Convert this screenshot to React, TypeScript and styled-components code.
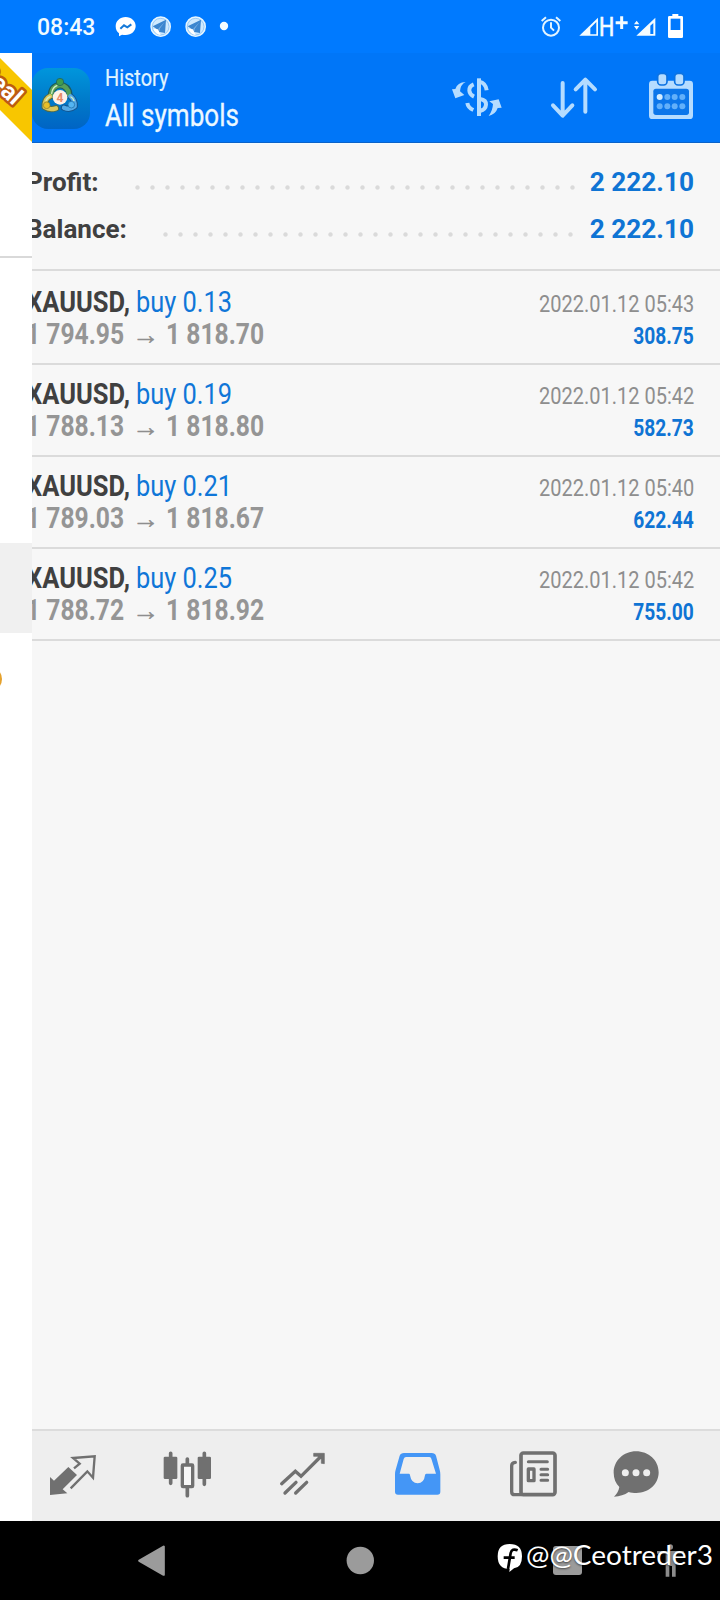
import React from 'react';
import styled, { createGlobalStyle } from 'styled-components';

const GlobalStyle = createGlobalStyle`
  *, *::before, *::after { box-sizing: border-box; }
  body { margin: 0; background: #000; font-family: Roboto, "Liberation Sans", sans-serif; }
  svg { display: block; flex: none; overflow: visible; }
`;

const Screen = styled.div`
  display: flex;
  flex-direction: column;
  width: 720px;
  height: 1600px;
  overflow: hidden;
`;

const StatusBar = styled.header`
  display: flex;
  align-items: flex-start;
  height: 53px;
  padding: 13px 0 0 37px;
  background: #007aff;
`;

const Clock = styled.time`
  width: 78px;
  font-size: 23px;
  line-height: 29px;
  font-weight: 500;
  color: #f2fbff;
`;

const StatusSpacer = styled.div`
  flex: 1;
`;

const Body = styled.div`
  display: flex;
  height: 1468px;
`;

const Drawer = styled.aside`
  display: flex;
  flex-direction: column;
  width: 32px;
  overflow: hidden;
  background: #fff;
`;

const DrawerDivider = styled.div`
  height: 2px;
  margin-top: 112px;
  background: #d9d9d9;
`;

const DrawerSelected = styled.div`
  height: 90px;
  margin-top: 285px;
  background: #f0f0f0;
`;

const DrawerDot = styled.div`
  width: 24px;
  height: 24px;
  margin: 34px 0 0 -22px;
  border-radius: 50%;
  background: #e5a12c;
`;

const Main = styled.main`
  display: flex;
  flex-direction: column;
  width: 688px;
  overflow: hidden;
  background: #f7f7f7;
`;

const Toolbar = styled.div`
  display: flex;
  height: 90px;
  background: #0076f8;
  border-bottom: 1px solid #0b62c9;
`;

const AppIcon = styled.div`
  width: 58px;
  height: 61px;
  margin-top: 15px;
  border-radius: 16px;
  background: linear-gradient(#0096dc, #0079c9 55%, #0064c4);
`;

const Titles = styled.div`
  flex: 1;
  padding: 11px 0 0 15px;
`;

const Condensed = styled.div<{ $scale: number; $right?: boolean }>`
  white-space: pre;
  width: max-content;
  transform: scaleX(${(p) => p.$scale});
  transform-origin: ${(p) => (p.$right ? 'right' : 'left')} center;
`;

const Subtitle = styled(Condensed)`
  font-size: 24px;
  line-height: 28px;
  color: #e0f4ff;
  -webkit-text-stroke: 0.2px #e0f4ff;
`;

const Title = styled(Condensed)`
  margin-top: 6px;
  font-size: 31px;
  line-height: 36px;
  color: #ecf8ff;
  -webkit-text-stroke: 0.3px #ecf8ff;
`;

const Actions = styled.div`
  display: flex;
  gap: 48px;
  padding: 18px 26px 0 0;
`;

const Summary = styled.section`
  height: 128px;
  padding: 16px 26px 0 0;
  border-top: 1px solid #f3fcff;
  border-bottom: 2px solid #dbdbdb;
`;

const SummaryRow = styled.div`
  display: flex;
  height: 47px;
  line-height: 44px;
  font-size: 26px;
  font-weight: 700;
  color: #404040;
`;

const SummaryLabel = styled.span<{ $width: number }>`
  width: ${(p) => p.$width}px;
  margin-left: -6px;
`;

const DotRun = styled.span<{ $count: number }>`
  flex: none;
  width: ${(p) => p.$count * 15}px;
  height: 15px;
  margin-top: 20px;
  background: radial-gradient(circle at center, #dadada 1.7px, transparent 2.7px) 0 0 / 15px 15px;
`;

const SummaryValue = styled.span`
  flex: 1;
  font-size: 26.2px;
  text-align: right;
  color: #0f74d4;
`;

const Deal = styled.article<{ $first?: boolean }>`
  display: flex;
  justify-content: space-between;
  height: ${(p) => (p.$first ? 94 : 92)}px;
  padding: ${(p) => (p.$first ? 14 : 12)}px 26px 0 0;
  border-bottom: 2px solid #dbdbdb;
`;

const DealInfo = styled.div`
  margin-left: -6px;
`;

const DealLine = styled.div`
  display: flex;
  height: 32px;
  line-height: 34px;
  font-size: 29px;
`;

const Piece = styled.div<{ $width: number }>`
  width: ${(p) => p.$width}px;
`;

const Symbol = styled(Condensed)`
  font-weight: 700;
  color: #404040;
`;

const Volume = styled(Condensed)`
  color: #0f76d8;
`;

const Price = styled(Condensed)`
  font-weight: 700;
  color: #959595;
`;

const Arrow = styled.span`
  font-family: "Liberation Sans", sans-serif;
  font-size: 27px;
  line-height: 36px;
  color: #8e8e8e;
  -webkit-text-stroke: 0.5px #8e8e8e;
`;

const DealMeta = styled.div`
  display: flex;
  flex-direction: column;
  align-items: flex-end;
  padding-top: 3px;
  font-size: 24px;
  line-height: 32px;
`;

const DealTime = styled(Condensed)`
  color: #8e8e8e;
`;

const DealProfit = styled(Condensed)`
  font-weight: 700;
  color: #0f74d4;
`;

const Tabs = styled.nav`
  display: flex;
  gap: 67px;
  height: 92px;
  margin-top: auto;
  padding: 18px 0 0 16px;
  background: #eee;
  border-top: 2px solid #dcdcdc;
`;

const LastTab = styled.div`
  margin-left: -11px;
`;

const SystemBar = styled.footer`
  position: relative;
  display: flex;
  height: 79px;
  padding: 23px 0 0 138px;
  background: #000;
`;

const SystemSlot = styled.div<{ $width: number }>`
  width: ${(p) => p.$width}px;
`;

const Watermark = styled.div`
  position: absolute;
  left: 497px;
  top: 17px;
  display: flex;
  gap: 3px;
`;

const WatermarkText = styled(Condensed)`
  font-family: Lato, sans-serif;
  font-size: 26px;
  line-height: 35px;
  color: #fff;
  text-shadow: 0 1px 2px rgba(0, 0, 0, 0.6);
`;

const deals = [
  { volume: '0.13', open: '1 794.95', close: '1 818.70', time: '2022.01.12 05:43', profit: '308.75' },
  { volume: '0.19', open: '1 788.13', close: '1 818.80', time: '2022.01.12 05:42', profit: '582.73' },
  { volume: '0.21', open: '1 789.03', close: '1 818.67', time: '2022.01.12 05:40', profit: '622.44' },
  { volume: '0.25', open: '1 788.72', close: '1 818.92', time: '2022.01.12 05:42', profit: '755.00' },
];

const GREY = '#707070';
const ICE = '#b5dcff';

const NotificationIcons = () => (
  <svg width="116" height="28" viewBox="345 39 348 84">
    <path d="M377 51c-17 0-30 12-30 28 0 9 4 17 10 21v9l9-5c4 1 7 1 11 1 17 0 30-12 30-27s-13-27-30-27z" fill="#fff" />
    <path d="M361 86l11-10 10 6 12-9" fill="none" stroke="#1479d8" strokeWidth="6" />
    {[482, 587].map((cx) => (
      <g key={cx}>
        <circle cx={cx} cy="80" r="29" fill="#cfeaff" stroke="#e6f6ff" strokeWidth="4" />
        <circle cx={cx} cy="80" r="25" fill="none" stroke="#7fb9f0" strokeWidth="2" />
        <path d={`M${cx - 24} 79l40-20-3 40-16-3-6 5-3-14z`} fill="#3c86cf" />
        <path d={`M${cx - 7} 86l19-20-15 20-1 9z`} fill="#7fb5e8" />
        <path d={`M${cx - 22} 86q7 18 22 19l-8-17z`} fill="#fff" />
      </g>
    ))}
    <circle cx="672" cy="78" r="12.5" fill="#f4fcff" />
  </svg>
);

const SystemIcons = () => (
  <svg width="180" height="28" viewBox="540 39 540 84">
    <g fill="none" stroke="#e2f4ff" strokeWidth="6">
      <circle cx="573" cy="83" r="24" />
      <path d="M573 67v16l9 9M545 63l13-11M601 63l-13-11" />
    </g>
    <path d="M658 107L714 53v54z" fill="#f4fcff" />
    <path d="M691 84l18-18v37h-18z" fill="#007aff" />
    <text x="717" y="108" fontSize="80" fill="#f4fcff" stroke="#f4fcff" strokeWidth="2" textLength="46" lengthAdjust="spacingAndGlyphs">H</text>
    <path d="M785 49v38M767 68h36" stroke="#f4fcff" strokeWidth="9" />
    <path d="M822 73l8-11 8 11zM822 78l8 11 8-11zM829 107l57-54v54z" fill="#f4fcff" />
    <path d="M871 77l9-8v33h-9z" fill="#007aff" />
    <path d="M937 42h18v6h10q4 0 4 4v58q0 4-4 4h-37q-4 0-4-4V52q0-4 4-4h9z" fill="#fff" />
    <rect x="932" y="56" width="29" height="34" fill="#007aff" />
  </svg>
);

const RealRibbon = () => (
  <svg width="32" height="91" viewBox="0 0 32 91">
    <path d="M0 5L32 37V89L0 57z" fill="#f8c600" />
    <text
      transform="translate(13.5 53) rotate(42)"
      textAnchor="end"
      fontSize="24"
      fontWeight="700"
      fill="#fff"
      stroke="#bd5b12"
      strokeWidth="5"
      strokeLinejoin="round"
      paintOrder="stroke"
    >
      Real
    </text>
  </svg>
);

const MetaTraderMark = () => (
  <svg width="58" height="61" viewBox="96 205 174 183">
    <g fill="none" strokeLinecap="round" strokeLinejoin="round">
      <path d="M153 288q0-28 27-32 27 4 28 30" stroke="#1d5a5c" strokeWidth="19" />
      <path d="M150 290q-17 8-16 32 14 10 34 4" stroke="#4f6a4a" strokeWidth="19" />
      <path d="M211 290q14 10 13 30-14 12-32 4" stroke="#14558f" strokeWidth="19" />
      <path d="M153 286q2-26 27-30 25 4 27 28" stroke="#56a05a" strokeWidth="13" />
      <path d="M150 290q-17 8-16 32 14 10 34 4" stroke="#dcc75c" strokeWidth="13" />
      <path d="M211 290q14 10 13 30-14 12-32 4" stroke="#55aae6" strokeWidth="13" />
      <path d="M155 281q3-19 16-23M138 302q5-9 12-11M222 303q-3-8-9-11" stroke="#d8efc4" strokeWidth="4" />
    </g>
    <circle cx="180" cy="247" r="11" fill="#3f9c50" stroke="#1d5a5c" strokeWidth="2" />
    <circle cx="140" cy="317" r="10" fill="#e9bf28" stroke="#8b7a2a" strokeWidth="2" />
    <circle cx="214" cy="315" r="10" fill="#53b5f2" stroke="#1b669f" strokeWidth="2" />
    <circle cx="180" cy="293" r="22" fill="#fff1e8" />
    <text x="180" y="306" fontSize="36" fontWeight="700" fill="#e88a68" textAnchor="middle">4</text>
  </svg>
);

const CurrencyIcon = () => (
  <svg width="50" height="50" viewBox="276 213 150 150">
    <g fill="none" stroke={ICE} strokeWidth="12">
      <path d="M357 235v113" />
      <path d="M358 245q19 4 22 26M360 297q19 3 18 17-1 15-18 19" />
      <path d="M341 253q-14 6-13 19 1 12 14 18M322 309q2 14 18 21" />
    </g>
    <path d="M317 246q-16 8-17 28l13 11-27 10-10-27 10-1q6-20 31-21zM386 348q21-5 27-24l12-1-9-25-28 6 11 8q-1 20-13 36z" fill={ICE} />
  </svg>
);

const SortIcon = () => (
  <svg width="50" height="50" viewBox="570 213 150 150">
    <path
      d="M608 249v97M579 316l29 31 29-31M676 335v-95M647 268l29-29 29 29"
      fill="none"
      stroke={ICE}
      strokeWidth="12"
      strokeLinecap="round"
      strokeLinejoin="round"
    />
  </svg>
);

const CalendarIcon = () => (
  <svg width="46" height="50" viewBox="864 213 138 150">
    <rect x="867" y="242" width="132" height="115" rx="10" fill={ICE} />
    <rect x="880" y="266" width="107" height="79" rx="8" fill="#0b76ea" />
    {[907, 958].map((x) => (
      <rect key={x} x={x - 14} y="220" width="28" height="35" rx="10" fill={ICE} stroke="#0b72e2" strokeWidth="5" />
    ))}
    {[291, 319].map((cy) =>
      [899, 922, 944, 967].map((cx) => (
        <circle key={`${cx}-${cy}`} cx={cx} cy={cy} r="9" fill={cx === 899 && cy === 291 ? '#d4edff' : '#62b0fa'} />
      )),
    )}
  </svg>
);

const QuotesIcon = () => (
  <svg width="48" height="50" viewBox="144 87 144 150">
    <path d="M150 171l12 11 43-41 26 24-43 43 14 12-52 5z" fill={GREY} />
    <path d="M222 145l17-14-20-17 65-5-5 64-17-19-50 51" fill="none" stroke={GREY} strokeWidth="7" />
  </svg>
);

const ChartIcon = () => (
  <svg width="48" height="50" viewBox="489 87 144 150">
    <g stroke={GREY} strokeWidth="11" strokeLinecap="round">
      <path d="M512 100v90M613 100v93M562 117v20M562 200v27" />
    </g>
    <rect x="491" y="110" width="41" height="67" rx="4" fill={GREY} />
    <rect x="593" y="110" width="40" height="67" rx="4" fill={GREY} />
    <rect x="547" y="135" width="31" height="65" rx="2" fill="#f7f7f7" stroke={GREY} strokeWidth="10" />
  </svg>
);

const TradeIcon = () => (
  <svg width="48" height="50" viewBox="834 87 144 150">
    <g fill="none" stroke={GREY} strokeWidth="10" strokeLinecap="round">
      <path d="M845 191l41-37 17 15 61-61" />
      <path d="M855 219l33-32M887 219l33-32" />
    </g>
    <path d="M941 100h32v31l-9-1v-12l-12-9h-11z" fill={GREY} stroke={GREY} strokeWidth="2" />
  </svg>
);

const HistoryIcon = () => (
  <svg width="48" height="50" viewBox="99 87 144 150">
    <path
      d="M132 99h83q10 0 13 8l11 42q2 7 2 14v52q0 9-9 9H114q-9 0-9-9v-52q0-8 2-14l12-42q3-8 13-8zM138 111q-5 0-7 6l-12 44h28q3 0 3 5 4 24 23 24t22-24q0-5 4-5h29l-14-45q-1-5-6-5z"
      fill="#4496f6"
      fillRule="evenodd"
    />
  </svg>
);

const NewsIcon = () => (
  <svg width="48" height="50" viewBox="444 87 144 150">
    <g fill="none" stroke={GREY}>
      <rect x="483" y="99" width="102" height="125" rx="7" strokeWidth="11" />
      <path d="M466 127q-11 1-11 10v78q0 9 9 9h20" strokeWidth="10" strokeLinecap="round" />
      <path d="M505 125h57M543 148h20M543 164h20M543 181h20" strokeWidth="9" strokeLinecap="round" />
      <rect x="505" y="147" width="17" height="35" strokeWidth="10" strokeLinejoin="round" />
    </g>
  </svg>
);

const ChatIcon = () => (
  <svg width="48" height="50" viewBox="756 87 144 150">
    <path d="M828 94c38 0 68 27 68 63 0 35-29 62-67 62-8 0-17-1-23-3-12 9-27 13-44 14 9-8 14-18 16-29-11-11-17-26-17-43 0-36 30-64 67-64z" fill={GREY} />
    {[796, 828, 860].map((cx) => (
      <circle key={cx} cx={cx} cy="158" r="10.5" fill="#eee" />
    ))}
  </svg>
);

export default function App() {
  return (
    <>
      <GlobalStyle />
      <Screen>
        <StatusBar>
          <Clock>08:43</Clock>
          <NotificationIcons />
          <StatusSpacer />
          <SystemIcons />
        </StatusBar>
        <Body>
          <Drawer>
            <RealRibbon />
            <DrawerDivider />
            <DrawerSelected />
            <DrawerDot />
          </Drawer>
          <Main>
            <Toolbar>
              <AppIcon>
                <MetaTraderMark />
              </AppIcon>
              <Titles>
                <Subtitle $scale={0.83}>History</Subtitle>
                <Title $scale={0.84}>All symbols</Title>
              </Titles>
              <Actions>
                <CurrencyIcon />
                <SortIcon />
                <CalendarIcon />
              </Actions>
            </Toolbar>
            <Summary>
              <SummaryRow>
                <SummaryLabel $width={104}>Profit:</SummaryLabel>
                <DotRun $count={30} />
                <SummaryValue>2 222.10</SummaryValue>
              </SummaryRow>
              <SummaryRow>
                <SummaryLabel $width={132}>Balance:</SummaryLabel>
                <DotRun $count={28} />
                <SummaryValue>2 222.10</SummaryValue>
              </SummaryRow>
            </Summary>
            {deals.map((deal, i) => (
              <Deal key={deal.volume} $first={i === 0}>
                <DealInfo>
                  <DealLine>
                    <Piece $width={110}>
                      <Symbol $scale={0.88}>XAUUSD,</Symbol>
                    </Piece>
                    <Volume $scale={0.875}>buy {deal.volume}</Volume>
                  </DealLine>
                  <DealLine>
                    <Piece $width={106}>
                      <Price $scale={0.85}>{deal.open}</Price>
                    </Piece>
                    <Piece $width={34}>
                      <Arrow>→</Arrow>
                    </Piece>
                    <Price $scale={0.85}>{deal.close}</Price>
                  </DealLine>
                </DealInfo>
                <DealMeta>
                  <DealTime $scale={0.833} $right>{deal.time}</DealTime>
                  <DealProfit $scale={0.8} $right>{deal.profit}</DealProfit>
                </DealMeta>
              </Deal>
            ))}
            <Tabs>
              <QuotesIcon />
              <ChartIcon />
              <TradeIcon />
              <HistoryIcon />
              <NewsIcon />
              <LastTab>
                <ChatIcon />
              </LastTab>
            </Tabs>
          </Main>
        </Body>
        <SystemBar>
          <SystemSlot $width={208}>
            <svg width="28" height="33" viewBox="414 372 84 99">
              <path d="M418 422l73-42v84z" fill="#9b9b9b" stroke="#9b9b9b" strokeWidth="7" strokeLinejoin="round" />
            </svg>
          </SystemSlot>
          <SystemSlot $width={207}>
            <svg width="28" height="33" viewBox="0 0 28 33">
              <circle cx="14.3" cy="16.5" r="13.7" fill="#9b9b9b" />
            </svg>
          </SystemSlot>
          <SystemSlot $width={100}>
            <svg width="29" height="33" viewBox="0 0 29 33">
              <rect y="2" width="29" height="29" rx="3" fill="#9b9b9b" />
            </svg>
          </SystemSlot>
          <svg width="36" height="33" viewBox="879 372 108 99">
            <circle cx="931" cy="381" r="8" fill="#8c8c8c" />
            <path d="M891 393h80v8h-24v69h-11v-32h-8v32h-11v-69h-26z" fill="#8c8c8c" />
          </svg>
          <Watermark>
            <svg width="26" height="36" viewBox="411 354 78 108">
              <path d="M449 372q37 0 37 37 0 34-24 36l-14 11 1-9q-36 0-36-38 0-37 36-37z" fill="#fff" />
              <path d="M473 391q-17-7-21 8l-8 48M431 413h33" fill="none" stroke="#000" strokeWidth="8" />
            </svg>
            <WatermarkText $scale={1.077}>@@Ceotreder3</WatermarkText>
          </Watermark>
        </SystemBar>
      </Screen>
    </>
  );
}
